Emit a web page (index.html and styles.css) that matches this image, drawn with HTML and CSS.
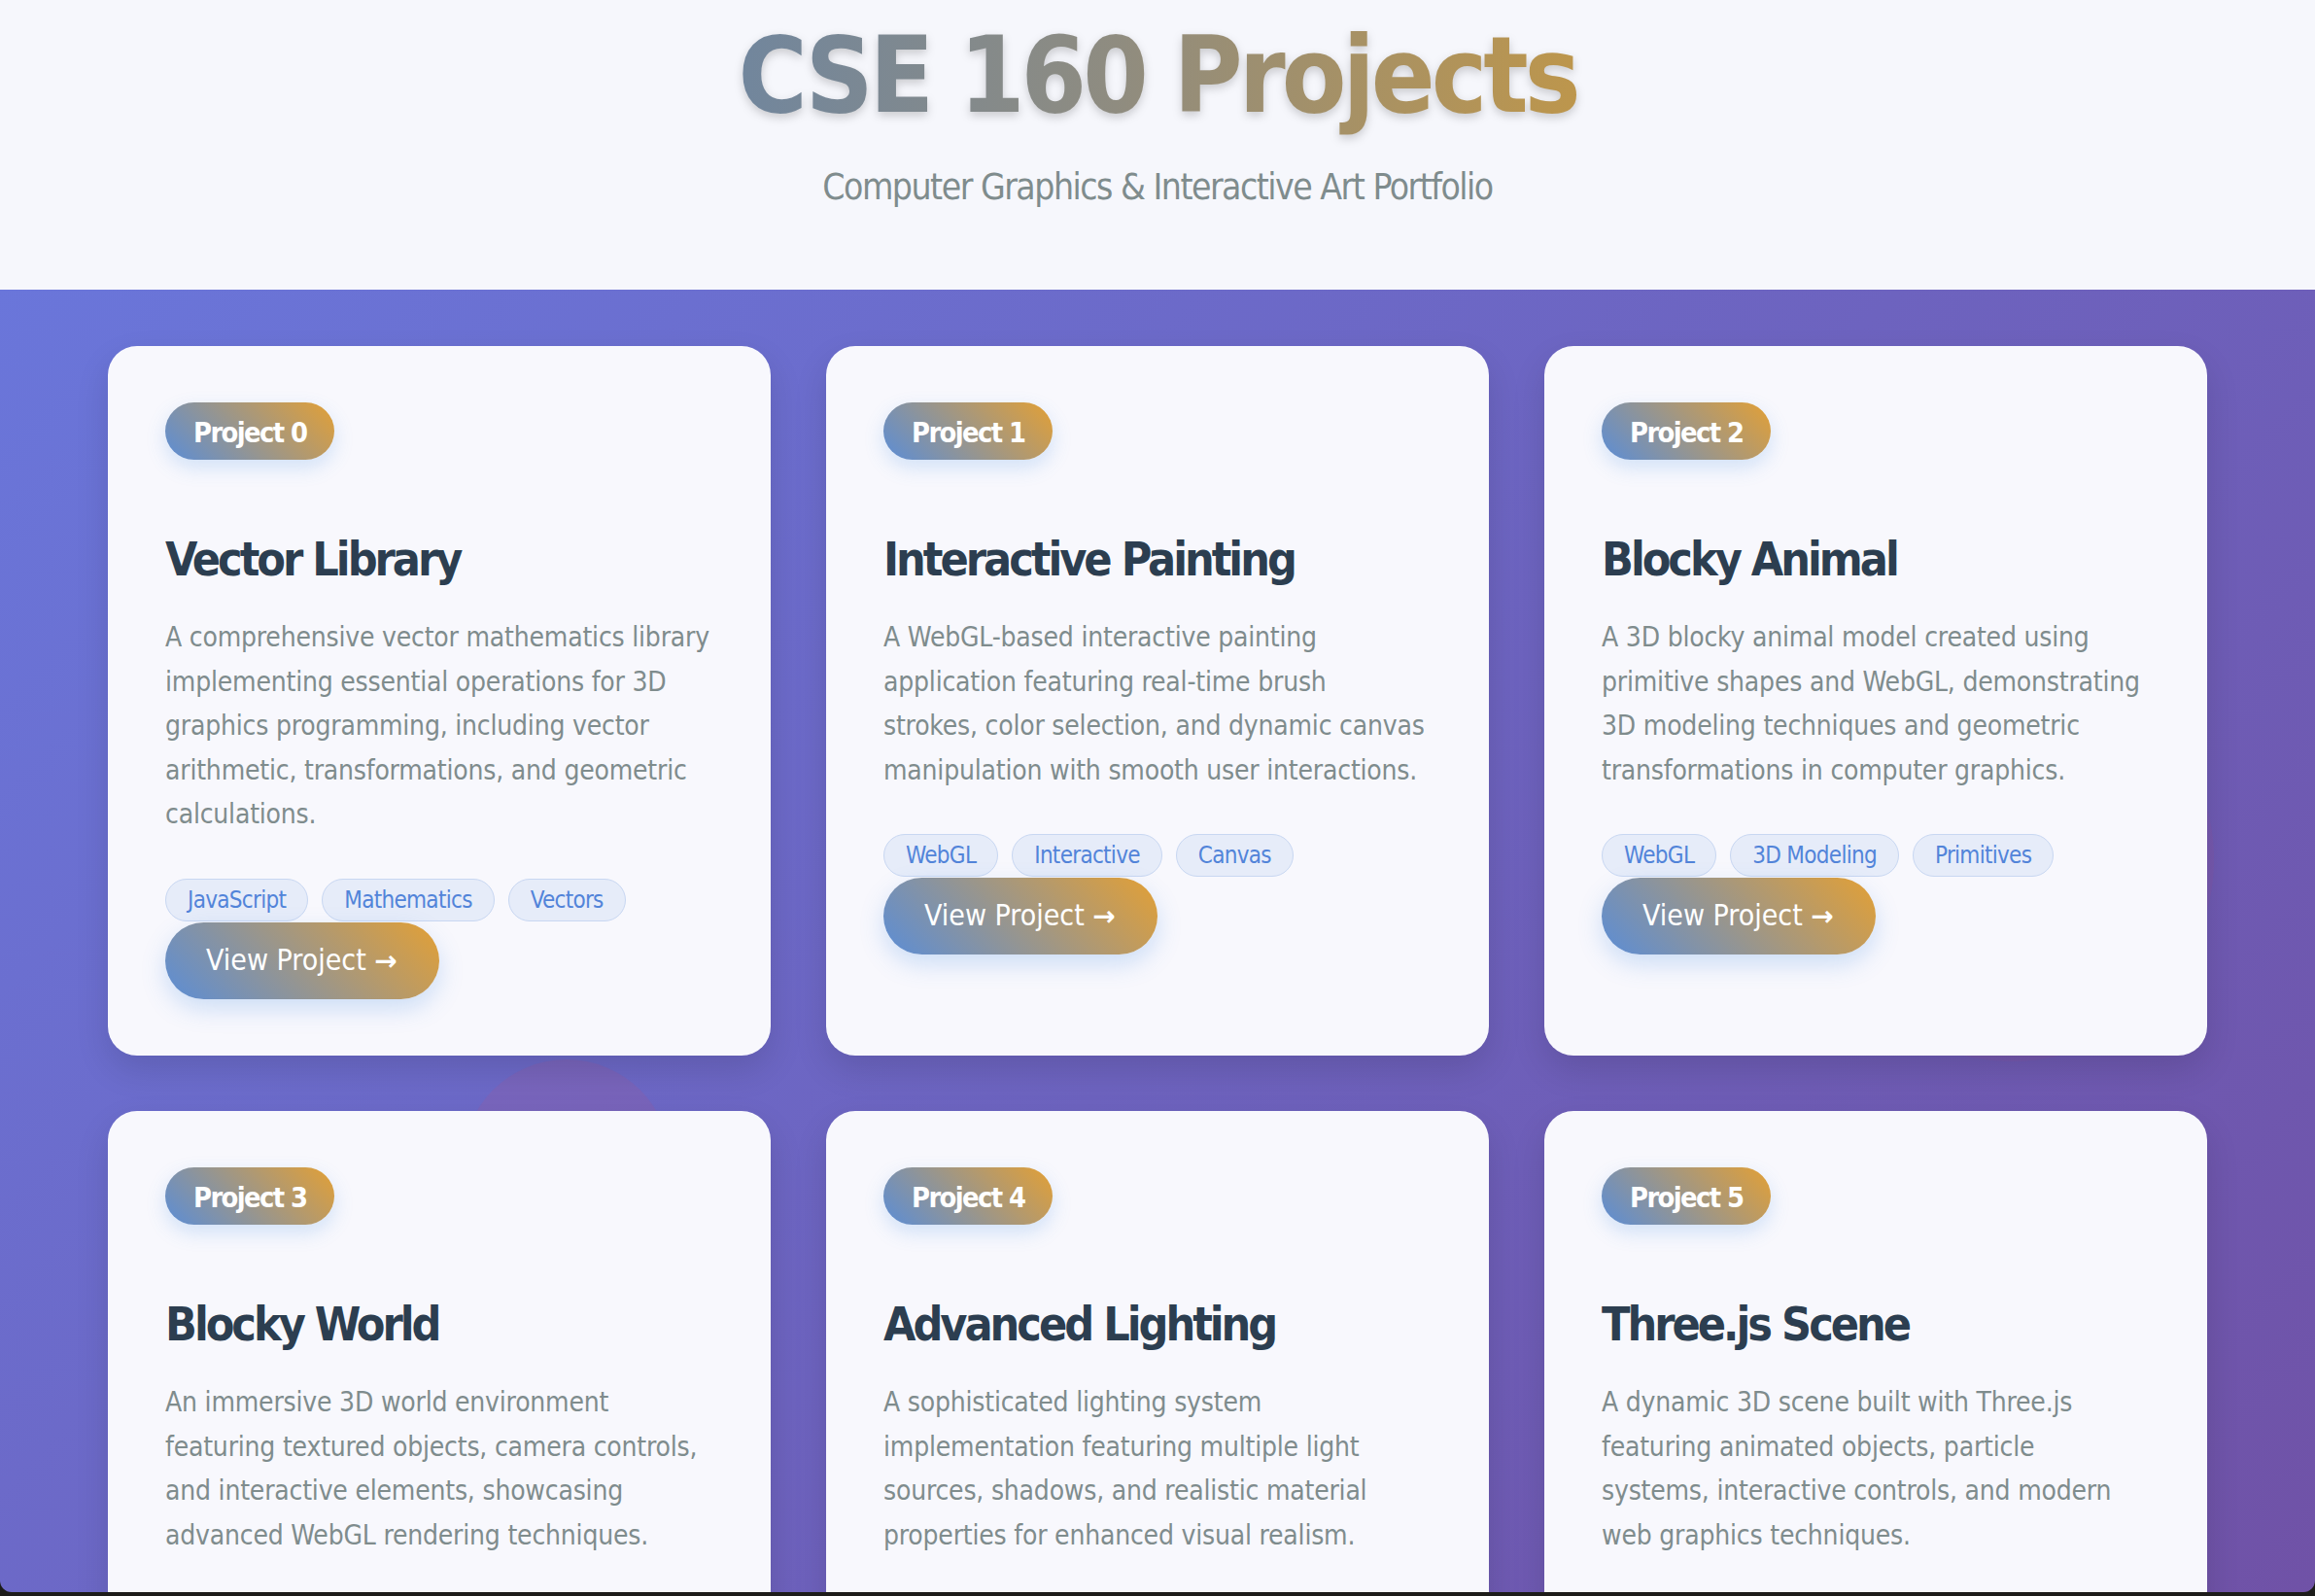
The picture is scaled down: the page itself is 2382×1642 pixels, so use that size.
FILE: index.html
```html
<!DOCTYPE html>
<html lang="en">
<head>
<meta charset="utf-8">
<title>CSE 160 Projects</title>
<link rel="stylesheet" href="styles.css">
</head>
<body>
<div class="window">
  <header class="hero">
    <h1 class="hero-title">CSE 160 Projects</h1>
    <p class="hero-sub">Computer Graphics &amp; Interactive Art Portfolio</p>
  </header>
  <main class="showcase">
    <div class="orb orb-a"></div>
    <div class="orb orb-b"></div>
    <div class="grid">
      <article class="card">
        <span class="badge">Project 0</span>
        <h2 class="card-title">Vector Library</h2>
        <p class="card-desc">A comprehensive vector mathematics library<br>implementing essential operations for 3D<br>graphics programming, including vector<br>arithmetic, transformations, and geometric<br>calculations.</p>
        <div class="tags"><span class="tag">JavaScript</span><span class="tag">Mathematics</span><span class="tag">Vectors</span></div>
        <a class="btn" href="#">View Project <span class="arrow">→</span></a>
      </article>
      <article class="card">
        <span class="badge">Project 1</span>
        <h2 class="card-title">Interactive Painting</h2>
        <p class="card-desc">A WebGL-based interactive painting<br>application featuring real-time brush<br>strokes, color selection, and dynamic canvas<br>manipulation with smooth user interactions.</p>
        <div class="tags"><span class="tag">WebGL</span><span class="tag">Interactive</span><span class="tag">Canvas</span></div>
        <a class="btn" href="#">View Project <span class="arrow">→</span></a>
      </article>
      <article class="card">
        <span class="badge">Project 2</span>
        <h2 class="card-title">Blocky Animal</h2>
        <p class="card-desc">A 3D blocky animal model created using<br>primitive shapes and WebGL, demonstrating<br>3D modeling techniques and geometric<br>transformations in computer graphics.</p>
        <div class="tags"><span class="tag">WebGL</span><span class="tag">3D Modeling</span><span class="tag">Primitives</span></div>
        <a class="btn" href="#">View Project <span class="arrow">→</span></a>
      </article>
      <article class="card">
        <span class="badge">Project 3</span>
        <h2 class="card-title">Blocky World</h2>
        <p class="card-desc">An immersive 3D world environment<br>featuring textured objects, camera controls,<br>and interactive elements, showcasing<br>advanced WebGL rendering techniques.</p>
        <div class="tags"><span class="tag">WebGL</span><span class="tag">Textures</span><span class="tag">Camera</span></div>
        <a class="btn" href="#">View Project <span class="arrow">→</span></a>
      </article>
      <article class="card">
        <span class="badge">Project 4</span>
        <h2 class="card-title">Advanced Lighting</h2>
        <p class="card-desc">A sophisticated lighting system<br>implementation featuring multiple light<br>sources, shadows, and realistic material<br>properties for enhanced visual realism.</p>
        <div class="tags"><span class="tag">WebGL</span><span class="tag">Lighting</span><span class="tag">Shaders</span></div>
        <a class="btn" href="#">View Project <span class="arrow">→</span></a>
      </article>
      <article class="card">
        <span class="badge">Project 5</span>
        <h2 class="card-title">Three.js Scene</h2>
        <p class="card-desc">A dynamic 3D scene built with Three.js<br>featuring animated objects, particle<br>systems, interactive controls, and modern<br>web graphics techniques.</p>
        <div class="tags"><span class="tag">Three.js</span><span class="tag">Animation</span><span class="tag">Particles</span></div>
        <a class="btn" href="#">View Project <span class="arrow">→</span></a>
      </article>
    </div>
  </main>
</div>
</body>
</html>
```
FILE: styles.css
```css
html, body {
  margin: 0;
  padding: 0;
  background: #1d1c1a;
}

.window {
  height: 1638px;
  overflow: hidden;
  border-radius: 0 0 12px 12px;
  display: flex;
  flex-direction: column;
  font-family: "DejaVu Sans Condensed", "DejaVu Sans", sans-serif;
}

.hero {
  flex-shrink: 0;
  height: 298px;
  box-sizing: border-box;
  padding-top: 13px;
  background: #f6f7fc;
  display: flex;
  flex-direction: column;
  align-items: center;
}

.hero-title {
  margin: 0;
  font-size: 108px;
  line-height: 1.2;
  font-weight: 700;
  letter-spacing: -4px;
  background: linear-gradient(90deg, #71869d 0%, #8f8c80 45%, #bd964c 100%);
  -webkit-background-clip: text;
  background-clip: text;
  color: transparent;
  filter: drop-shadow(0 4px 5px rgba(0, 0, 0, 0.18));
}

.hero-sub {
  margin: 24px 0 0;
  font-size: 37px;
  line-height: 1.4;
  color: #7f8c8d;
  letter-spacing: -1.5px;
}

.showcase {
  flex: 1;
  position: relative;
  padding-top: 58px;
  background: linear-gradient(135deg, #6a76da 0%, #7050a4 100%);
}

.orb {
  position: absolute;
  border-radius: 50%;
}

.orb-a {
  left: 476px;
  top: 792px;
  width: 214px;
  height: 214px;
  background: rgba(230, 70, 100, 0.1);
}

.orb-b {
  left: 1862px;
  top: 378px;
  width: 416px;
  height: 416px;
  background: rgba(230, 70, 100, 0.06);
}

.grid {
  position: relative;
  z-index: 1;
  width: 2160px;
  margin: 0 auto;
  display: grid;
  grid-template-columns: repeat(3, 1fr);
  gap: 57px;
}

.card {
  background: #f8f8fd;
  border-radius: 30px;
  padding: 58px 59px;
  box-shadow: 0 15px 35px rgba(0, 0, 0, 0.12);
  display: flex;
  flex-direction: column;
  align-items: flex-start;
}

.badge {
  font-weight: 700;
  font-size: 28.8px;
  line-height: 33px;
  padding: 15px 29px 11px;
  border-radius: 40px;
  color: #fff;
  letter-spacing: -1.6px;
  background: linear-gradient(45deg, #5b8dd6 0%, #e3a035 100%);
  box-shadow: 0 8px 20px rgba(74, 144, 226, 0.22);
  margin-bottom: 73px;
}

.card-title {
  margin: 0 0 29px;
  font-size: 48px;
  line-height: 58px;
  font-weight: 700;
  color: #2c3e50;
  letter-spacing: -3px;
}

.card-desc {
  margin: 0 0 43px;
  font-size: 28px;
  line-height: 45.6px;
  color: #7f8c8d;
  letter-spacing: -0.2px;
}

.tags {
  display: flex;
  flex-wrap: wrap;
  gap: 14px;
  margin-bottom: 1px;
}

.tag {
  font-size: 24px;
  line-height: 26px;
  padding: 8px 22px;
  border: 1px solid #c8d7f2;
  background: #e6ecf9;
  border-radius: 30px;
  color: #5284d9;
  letter-spacing: -0.7px;
}

.btn {
  font-size: 30px;
  line-height: 36px;
  padding: 21px 43px 21px 42px;
  border-radius: 50px;
  color: #fff;
  text-decoration: none;
  background: linear-gradient(45deg, #5b8dd6 0%, #e3a035 100%);
  box-shadow: 0 10px 25px rgba(74, 144, 226, 0.25);
}

.arrow {
  font-family: "DejaVu Sans", sans-serif;
  font-weight: 700;
  font-size: 28px;
}
```
